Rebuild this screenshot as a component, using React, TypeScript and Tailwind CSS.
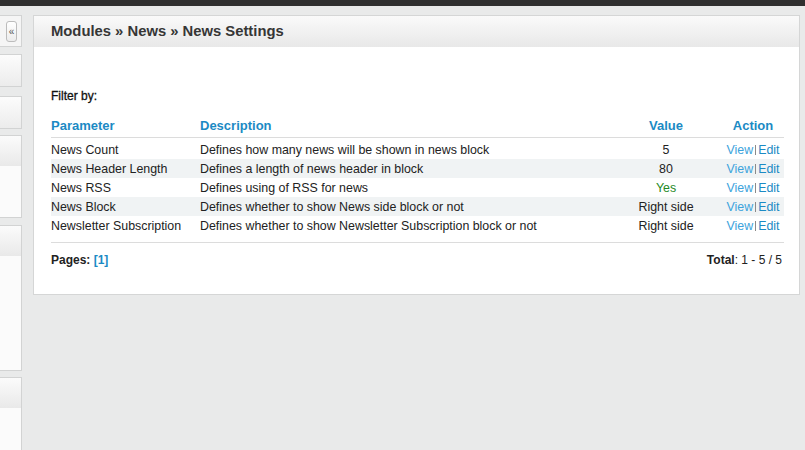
import React from "react";

interface Setting {
  name: string;
  description: string;
  value: string;
  green?: boolean;
}

const settings: Setting[] = [
  { name: "News Count", description: "Defines how many news will be shown in news block", value: "5" },
  { name: "News Header Length", description: "Defines a length of news header in block", value: "80" },
  { name: "News RSS", description: "Defines using of RSS for news", value: "Yes", green: true },
  { name: "News Block", description: "Defines whether to show News side block or not", value: "Right side" },
  {
    name: "Newsletter Subscription",
    description: "Defines whether to show Newsletter Subscription block or not",
    value: "Right side",
  },
];

function SidePanel({ height, header }: { height: string; header?: boolean }) {
  return (
    <div className={`${height} border border-l-0 border-[#d2d3d3] bg-[#fbfbfb]`}>
      {header ? (
        <div className="h-[30px] bg-gradient-to-b from-[#fbfbfb] to-[#e9e9e9]" />
      ) : (
        <div className="h-full bg-gradient-to-b from-[#fcfcfc] to-[#ececec]" />
      )}
    </div>
  );
}

function Sidebar() {
  return (
    <div className="flex w-[22px] shrink-0 flex-col">
      <div className="flex h-[32px] items-start border border-l-0 border-[#d2d3d3] bg-[#f5f5f5] pl-[6px] pt-[5px]">
        <div className="flex h-[21px] w-[11px] items-center justify-center rounded-[3px] border border-[#bcbcbc] bg-gradient-to-b from-white to-[#ececec] text-[10px] leading-none text-[#555]">
          «
        </div>
      </div>
      <div className="mt-[7px]">
        <SidePanel height="h-[33px]" />
      </div>
      <div className="mt-[9px]">
        <SidePanel height="h-[33px]" />
      </div>
      <div className="mt-[6px]">
        <SidePanel height="h-[83px]" header />
      </div>
      <div className="mt-[7px]">
        <SidePanel height="h-[146px]" header />
      </div>
      <div className="mt-[6px]">
        <SidePanel height="h-[90px]" header />
      </div>
    </div>
  );
}

function SettingsTable() {
  return (
    <div className="w-full">
      <div className="flex h-[21px] border-b border-[#dcdcdc] pt-px text-[13px] font-bold leading-[16px] text-[#1b8ac4]">
        <div className="w-[149px]">Parameter</div>
        <div className="flex-1">Description</div>
        <div className="w-[74px] text-center">Value</div>
        <div className="w-[81px] pl-[19px] text-center">Action</div>
      </div>
      <div className="pt-[2px]">
        {settings.map((s, i) => (
          <div
            key={s.name}
            className={`flex h-[19px] items-center text-[12.4px] leading-[14px] text-[#222] ${
              i % 2 === 1 ? "bg-[#f0f3f4]" : ""
            }`}
          >
            <div className="w-[149px]">{s.name}</div>
            <div className="flex-1">{s.description}</div>
            <div className={`w-[74px] text-center ${s.green ? "text-[#1f8a1f]" : ""}`}>{s.value}</div>
            <div className="flex w-[81px] items-center justify-center pl-[19px]">
              <span className="text-[#3ca3dc]">View</span>
              <span className="mx-[2px] inline-block h-[10px] w-px bg-[#8a8a8a]" />
              <span className="text-[#1b8ac4]">Edit</span>
            </div>
          </div>
        ))}
      </div>
    </div>
  );
}

export default function App() {
  return (
    <div
      className="h-[450px] w-[805px] overflow-hidden bg-[#e9eaea]"
      style={{ fontFamily: '"Liberation Sans", Arial, sans-serif' }}
    >
      <div className="h-[6px] bg-[#2f2f2f]" />
      <div className="flex pt-[9px]">
        <Sidebar />
        <div className="ml-[11px] mr-[5px] flex-1">
          <div className="border border-[#d5d6d6] bg-white">
            <div className="flex h-[31px] items-center bg-gradient-to-b from-[#fafafa] to-[#e8e8e8] pl-[17px] text-[14.8px] font-bold text-[#363636]">
              Modules » News » News Settings
            </div>
            <div className="pl-[17px] pr-[15px] pt-[42px] pb-[27px]">
              <div className="text-[12px] leading-[14px] text-[#111] [-webkit-text-stroke:0.3px_#111]">Filter by:</div>
              <div className="mt-[14px]">
                <SettingsTable />
              </div>
              <div className="mt-[7px] flex justify-between border-t border-[#dcdcdc] pt-[10px] text-[12px] leading-[14px] text-[#222]">
                <div>
                  <span className="font-bold">Pages: </span>
                  <span className="font-bold text-[#1b8ac4]">[1]</span>
                </div>
                <div className="pr-[2px]">
                  <span className="font-bold">Total</span>: 1 - 5 / 5
                </div>
              </div>
            </div>
          </div>
        </div>
      </div>
    </div>
  );
}
